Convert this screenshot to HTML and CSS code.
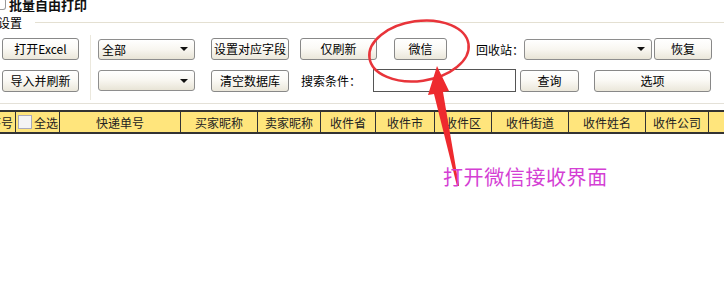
FILE: index.html
```html
<!DOCTYPE html>
<html lang="zh-CN">

<head>
    <meta charset="UTF-8">
    <title>批量自由打印</title>
    <link rel="stylesheet" href="styles.css">
</head>

<body>
    <div class="app">
        <div class="title"><span class="logo"></span>批量自由打印</div>
        <div class="group-head"><span>设置</span><i class="rule"></i></div>
        <div class="tools">
            <div class="col-left">
                <button class="btn w77">打开Excel</button>
                <button class="btn w77">导入并刷新</button>
            </div>
            <div class="divider"></div>
            <div class="col-right">
                <div class="row">
                    <div class="select w97"><span>全部</span><b class="caret"></b></div>
                    <button class="btn w78 ml16">设置对应字段</button>
                    <button class="btn w77 ml11">仅刷新</button>
                    <button class="btn w53 ml17">微信</button>
                    <span class="label ml29">回收站：</span>
                    <div class="select w128"><span></span><b class="caret"></b></div>
                    <button class="btn w58 ml2">恢复</button>
                </div>
                <div class="row">
                    <div class="select w97"><span></span><b class="caret"></b></div>
                    <button class="btn w78 ml16">清空数据库</button>
                    <span class="label ml12">搜索条件：</span>
                    <input class="search" type="text">
                    <button class="btn w59 ml4">查询</button>
                    <button class="btn w117 ml15">选项</button>
                </div>
            </div>
        </div>
        <div class="sep"></div>
        <div class="grid-head">
            <div class="cell" style="width:32px">序号</div>
            <div class="cell check" style="width:44px"><i class="box"></i>全选</div>
            <div class="cell" style="width:121px">快递单号</div>
            <div class="cell" style="width:77px">买家昵称</div>
            <div class="cell" style="width:63px">卖家昵称</div>
            <div class="cell" style="width:55px">收件省</div>
            <div class="cell" style="width:59px">收件市</div>
            <div class="cell" style="width:57px">收件区</div>
            <div class="cell" style="width:77px">收件街道</div>
            <div class="cell" style="width:77px">收件姓名</div>
            <div class="cell" style="width:63px">收件公司</div>
            <div class="cell" style="width:40px"></div>
        </div>

        <!-- 标注：红圈 + 箭头 + 说明文字 -->
        <svg class="mark" width="724" height="290" viewBox="0 0 724 290">
            <ellipse cx="419" cy="51" rx="50" ry="30" transform="rotate(-8 419 51)" fill="none" stroke="#e8343a" stroke-width="2.5"/>
            <polygon points="459,186 443,92 449,91 437,66 428,95 434,94 457,186" fill="#ee2a2e"/>
        </svg>
        <div class="note">打开微信接收界面</div>
    </div>
</body>

</html>
```

FILE: styles.css
```css
body {
    margin: 0;
    padding: 0;
    background-color: #fff;
    font-family: "Noto Sans CJK SC", "Liberation Sans", sans-serif;
    font-size: 12px;
    color: #000;
}

.app {
    position: relative;
    width: 724px;
    height: 290px;
    overflow: hidden;
}

.title {
    display: flex;
    align-items: center;
    margin-top: -5px;
    height: 18px;
    font-size: 13px;
    font-weight: bold;
    color: #111;
}

.logo {
    display: inline-block;
    width: 5px;
    height: 10px;
    margin-right: 3px;
    border: 1px solid #999;
    border-left: none;
    border-radius: 0 3px 3px 0;
}

.group-head {
    display: flex;
    align-items: center;
    height: 14px;
    margin-top: 2px;
    font-size: 12px;
}

.group-head span {
    margin-left: -2px;
}

.rule {
    flex: 1;
    margin-left: 13px;
    height: 1px;
    background-color: #e4e0d2;
}

.tools {
    display: flex;
    margin-top: 9px;
    height: 62px;
}

.col-left {
    display: flex;
    flex-direction: column;
    gap: 10px;
    padding-left: 2px;
}

.divider {
    width: 1px;
    margin: -3px 7px 0 11px;
    background-color: #ebe8dd;
}

.col-right {
    display: flex;
    flex-direction: column;
    gap: 9px;
}

.row {
    display: flex;
    align-items: center;
    height: 22px;
}

.row + .row {
    height: 23px;
}

.btn {
    height: 22px;
    padding: 0;
    border: 1px solid #888;
    border-radius: 3px;
    background: linear-gradient(#fff 0%, #fbfaf6 45%, #ebe7da 100%);
    font-family: "Noto Sans CJK SC", "Liberation Sans", sans-serif;
    font-size: 12px;
    color: #000;
    line-height: 20px;
}

.select {
    display: flex;
    align-items: center;
    justify-content: space-between;
    box-sizing: border-box;
    height: 21px;
    padding: 0 6px 0 3px;
    border: 1px solid #8e8e8e;
    border-radius: 3px;
    background: linear-gradient(#fff 0%, #f8f6f0 50%, #e8e4d6 100%);
}

.caret {
    width: 0;
    height: 0;
    border-left: 4px solid transparent;
    border-right: 4px solid transparent;
    border-top: 4px solid #111;
}

.label {
    font-size: 12px;
    white-space: nowrap;
}

.search {
    box-sizing: border-box;
    width: 143px;
    height: 23px;
    margin-left: 12px;
    border: 1px solid #555;
    background: #fff;
}

.w53 { width: 53px; }
.w58 { width: 58px; }
.w59 { width: 59px; }
.w77 { width: 77px; }
.w78 { width: 78px; }
.w97 { width: 97px; }
.w117 { width: 117px; }
.w128 { width: 128px; }
.ml2 { margin-left: 2px; }
.ml4 { margin-left: 4px; }
.ml11 { margin-left: 11px; }
.ml12 { margin-left: 12px; }
.ml15 { margin-left: 15px; }
.ml16 { margin-left: 16px; }
.ml17 { margin-left: 17px; }
.ml29 { margin-left: 29px; }

.sep {
    margin-top: 3px;
    height: 1px;
    background-color: #e4e1d8;
}

.grid-head {
    display: flex;
    margin-top: 6px;
    margin-left: -16px;
    height: 20px;
    border-top: 2px solid #333;
    border-bottom: 2px solid #333;
    background-color: #ffe57c;
}

.cell {
    display: flex;
    align-items: center;
    justify-content: center;
    flex-shrink: 0;
    box-sizing: border-box;
    border-right: 1px solid #333;
    white-space: nowrap;
    overflow: hidden;
    font-size: 12px;
    color: #222;
}

.cell:first-child {
    justify-content: flex-end;
    padding-right: 2px;
}

.check {
    justify-content: flex-start;
    gap: 2px;
    padding-left: 2px;
}

.box {
    width: 12px;
    height: 12px;
    border: 1px solid #aab;
    background-color: #f4f4f4;
}

.mark {
    position: absolute;
    left: 0;
    top: 0;
    pointer-events: none;
}

.note {
    position: absolute;
    left: 443px;
    top: 162px;
    font-size: 20px;
    color: #d43fd4;
    letter-spacing: 0.6px;
}
```
